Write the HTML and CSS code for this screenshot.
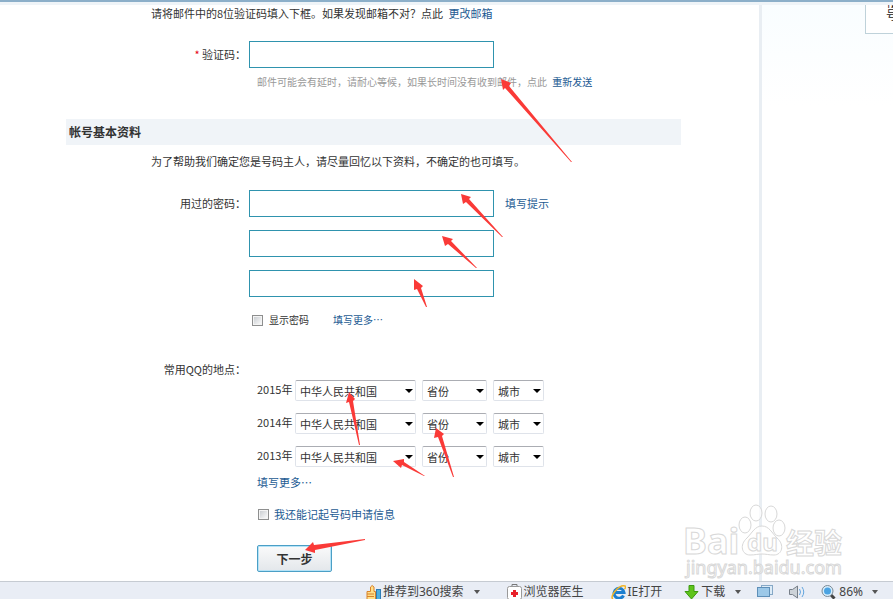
FILE: index.html
```
<!DOCTYPE html>
<html lang="zh-CN">
<head>
    <meta charset="UTF-8">
    <meta name="viewport" content="width=device-width, initial-scale=1.0">
    <title>帐号申诉</title>
    <link rel="stylesheet" href="styles.css">
</head>
<body>
    <div class="topline"></div>
    <div class="main">
        <form class="content">
            <p class="tip">请将邮件中的8位验证码填入下框。如果发现邮箱不对&#65311;点此 <a href="#">更改邮箱</a></p>
            <div class="row code_row">
                <label class="name" for="code"><span class="must">*</span> 验证码&#65306;</label>
                <input class="text" type="text" id="code">
            </div>
            <p class="hint">邮件可能会有延时&#65292;请耐心等候&#65292;如果长时间没有收到邮件&#65292;点此 <a href="#">重新发送</a></p>

            <h2>帐号基本资料</h2>
            <p class="tip">为了帮助我们确定您是号码主人&#65292;请尽量回忆以下资料&#65292;不确定的也可填写。</p>

            <!-- 用过的密码 -->
            <div class="row pwd_row">
                <label class="name" for="pwd1">用过的密码&#65306;</label>
                <div class="pwds">
                    <input class="text" type="text" id="pwd1">
                    <input class="text" type="text" aria-label="密码2">
                    <input class="text" type="text" aria-label="密码3">
                </div>
                <a class="pwd_tip" href="#">填写提示</a>
            </div>
            <div class="show_row">
                <input class="check" type="checkbox" id="show">
                <label for="show">显示密码</label>
                <a href="#">填写更多…</a>
            </div>

            <!-- 常用地点 -->
            <div class="name">常用QQ的地点&#65306;</div>
            <div class="places">
                <span>2015年</span>
                <select aria-label="2015年国家"><option>中华人民共和国</option></select>
                <select aria-label="2015年省份"><option>省份</option></select>
                <select aria-label="2015年城市"><option>城市</option></select>
                <span>2014年</span>
                <select aria-label="2014年国家"><option>中华人民共和国</option></select>
                <select aria-label="2014年省份"><option>省份</option></select>
                <select aria-label="2014年城市"><option>城市</option></select>
                <span>2013年</span>
                <select aria-label="2013年国家"><option>中华人民共和国</option></select>
                <select aria-label="2013年省份"><option>省份</option></select>
                <select aria-label="2013年城市"><option>城市</option></select>
            </div>
            <div class="more"><a href="#">填写更多…</a></div>
            <div class="remember">
                <input class="check" type="checkbox" id="remember">
                <label for="remember">我还能记起号码申请信息</label>
            </div>
            <button class="next" type="button">下一步</button>
        </form>
        <div class="side">
            <div class="side_box"><p>帐号</p></div>
        </div>
    </div>

    <!-- 浏览器状态栏 -->
    <div class="status">
        <button type="button" class="wide">
            <svg width="15" height="16" viewBox="0 0 15 16"><path d="M1 7.500h3.500V3q1.500-3 3.500 0v4.500h1.500v8H1z" fill="#ffe08a" stroke="#d9822b"/><path d="M1 10h7M1 12.500h7" stroke="#d9822b"/><rect x="10.500" y="5.500" width="4" height="10" fill="#4fb0e0" stroke="#2f7db5"/></svg>
            推荐到360搜索<i class="arrow"></i>
        </button>
        <button type="button" class="wide">
            <svg width="15" height="16" viewBox="0 0 15 16"><path d="M5 3V.500h5V3" fill="none" stroke="#777"/><rect x=".5" y="2.500" width="14" height="13" rx="2" fill="#fff" stroke="#999"/><path d="M7.500 6v7M4 9.500h7" stroke="#e8202a" stroke-width="3"/></svg>
            浏览器医生
        </button>
        <button type="button" class="mid">
            <svg width="15" height="16" viewBox="0 0 15 16"><path d="M12.500 11.500A5 5 0 1 1 13 8.500H4" fill="none" stroke="#1c7fd0" stroke-width="3"/><path d="M2 15C-2 13 8 0 14 2c1 .5.500 2-.5 3" fill="none" stroke="#f2b526" stroke-width="1.500"/></svg>
            IE打开
        </button>
        <button type="button">
            <svg width="15" height="16" viewBox="0 0 15 16"><path d="M5 1.500h5v6h4L7.500 15 1 7.500h4z" fill="#5fc41c" stroke="#3d9a10"/></svg>
            下载<i class="arrow"></i>
        </button>
        <button type="button" aria-label="窗口">
            <svg width="16" height="16" viewBox="0 0 16 16"><rect x="4.500" y="1.500" width="11" height="9" fill="#dcebf7" stroke="#86a8c6"/><rect x=".5" y="3.500" width="12" height="9" fill="#9cc8e8" stroke="#5e8fb8"/></svg>
        </button>
        <button type="button" aria-label="声音">
            <svg width="16" height="16" viewBox="0 0 16 16" fill="none"><path d="M.5 5.500h3L8.500 2v12l-5-3.500h-3z" fill="#ccd2d8" stroke="#777f88"/><path d="M10.500 5q2 3 0 6M13 3q3.500 5 0 10" stroke="#62a5de"/></svg>
        </button>
        <button type="button" class="zoom">
            <svg width="15" height="16" viewBox="0 0 15 16"><path d="M9.500 10.500l4 4" stroke="#444" stroke-width="3"/><circle cx="6.500" cy="7" r="5.500" fill="#d5ecfb" stroke="#7c8a96"/><circle cx="6.500" cy="7" r="3.500" fill="#4ba3e2"/></svg>
            86%<i class="arrow"></i>
        </button>
    </div>

    <!-- 水印 -->
    <svg class="watermark" width="170" height="80" viewBox="0 0 170 80">
        <g fill="#fff" fill-opacity=".7" stroke="#d8d8d8">
            <ellipse cx="65" cy="25" rx="6" ry="8"/>
            <ellipse cx="76" cy="13" rx="6" ry="8"/>
            <ellipse cx="91" cy="14" rx="6" ry="8"/>
            <ellipse cx="99" cy="28" rx="6" ry="8"/>
            <path d="M82 26c7 0 10 7 15 12 8 7 5 17-3 17-5 0-8-1-12-1s-7 1-12 1c-8 0-11-10-3-17 5-5 8-12 15-12z"/>
            <text class="wm_logo" x="3" y="54">Bai</text>
            <text class="wm_du" x="67" y="51">du</text>
            <text class="wm_cn" x="106" y="54">经验</text>
            <text class="wm_url" x="6" y="74">jingyan.baidu.com</text>
        </g>
    </svg>

    <!-- 红色箭头标注 -->
    <svg class="marks" width="893" height="599" viewBox="0 0 893 599">
        <polygon points="501,79 511,83 509,86 572,162 571,162 505,88 503,90"/>
        <polygon points="461,194 471,197 469,199 503,237 502,237 466,202 463,204"/>
        <polygon points="442,236 453,239 451,241 477,268 476,268 448,244 445,246"/>
        <polygon points="414,279 423,286 421,288 427,307 426,307 417,289 414,290"/>
        <polygon points="349,392 355,399 353,401 360,445 359,445 349,402 346,403"/>
        <polygon points="436,428 444,434 442,436 454,477 453,477 438,437 434,438"/>
        <polygon points="393,461 404,459 404,462 425,476 424,476 402,465 401,468"/>
        <polygon points="305,550 313,542 314,545 365,539 365,540 315,550 315,553"/>
    </svg>
</body>
</html>
```

FILE: styles.css
```
*{
    margin: 0;
    padding: 0;
    box-sizing: border-box;
}
body{
    position: relative;
    display: flex;
    flex-direction: column;
    height: 100vh;
    overflow: hidden;
    background: #fff;
    color: #333;
    font: 11px/16px "Noto Sans CJK SC", sans-serif;
}
a{
    color: #1d5b93;
    text-decoration: none;
}
input,select,button{
    font: inherit;
    color: inherit;
}
.topline{
    flex: none;
    height: 5px;
    background: #eff4f8;
    border-top: 2px solid #8cafc9;
}
.main{
    flex: 1;
    display: flex;
    min-height: 0;
    overflow: hidden;
}

/* 表单 */
.content{
    flex: 1;
    padding: 0 78px 0 66px;
}
.content p a{
    margin-left: 3px;
}
.content .tip{
    padding-left: 85px;
}
.content .row{
    display: flex;
    gap: 3px;
}
.content .name{
    width: 180px;
    line-height: 16px;
    text-align: right;
}
.content .row .name{
    line-height: 27px;
}
.content .must{
    color: #e60012;
}
.content .text{
    display: block;
    width: 245px;
    height: 27px;
    padding: 0 4px;
    border: 1px solid #2f93ae;
    background: #fff;
}
.content .code_row{
    margin-top: 20px;
}
.content .hint{
    margin-top: 6px;
    padding-left: 191px;
    font-size: 10px;
    color: #999;
}
.content h2{
    margin: 29px 0 8px;
    padding-left: 3px;
    background: #f0f4f8;
    font-size: 12px;
    line-height: 26px;
}
.content .pwd_row{
    margin-top: 21px;
}
.content .pwds{
    display: grid;
    gap: 13px;
}
.content .pwd_tip{
    padding-left: 8px;
    line-height: 27px;
}
.content .show_row{
    display: flex;
    align-items: center;
    margin: 15px 0 33px;
    padding-left: 186px;
    font-size: 10px;
}
.content .show_row label{
    margin: 0 24px 0 6px;
}
.content .check{
    appearance: none;
    width: 11px;
    height: 11px;
    border: 1px solid #8e8f8f;
    background: linear-gradient(135deg,#c4c8cc,#fff);
    box-shadow: inset 0 0 0 1px #f4f4f4;
}
.content .places{
    display: grid;
    grid-template-columns: 32px 121px 65px 51px;
    gap: 12px 6px;
    margin-top: 3px;
    padding-left: 191px;
}
.content .places span{
    line-height: 18px;
    white-space: nowrap;
}
.content .places select{
    appearance: none;
    height: 21px;
    padding: 1px 0 0 4px;
    border: 1px solid #dfe3ea;
    border-top-color: #abadb3;
    border-radius: 2px;
    background: #fff url("data:image/svg+xml,%3Csvg xmlns='http://www.w3.org/2000/svg' width='8' height='4'%3E%3Cpath d='M0 0h8L4 4z'/%3E%3C/svg%3E") no-repeat right 2px center;
}
.content .more{
    margin-top: 7px;
    padding-left: 191px;
}
.content .remember{
    display: flex;
    align-items: center;
    gap: 5px;
    margin: 16px 0 23px;
    padding-left: 192px;
    color: #1d5b93;
}
.content .next{
    display: block;
    width: 75px;
    height: 27px;
    margin-left: 191px;
    border: 1px solid #4b9fc6;
    border-radius: 2px;
    background: linear-gradient(#fafafa,#e3e7eb);
    box-shadow: inset 0 0 0 1px #b5e3f7;
    font-size: 12px;
    font-weight: bold;
}

/* 右侧 */
.side{
    width: 134px;
    border-left: 3px solid #e9eef3;
    background: linear-gradient(#f9fdff,#fff 100px);
}
.side .side_box{
    height: 29px;
    margin-left: 103px;
    padding-left: 20px;
    overflow: hidden;
    border: 1px solid #bfd2da;
    border-width: 0 0 1px 1px;
    background: #fff;
}
.side .side_box p{
    width: 12px;
    margin-top: -10px;
    font-size: 12px;
    line-height: 13px;
    color: #222;
}

/* 状态栏 */
.status{
    flex: none;
    display: flex;
    justify-content: flex-end;
    gap: 16px;
    height: 18px;
    padding: 2px 15px 0 0;
    overflow: hidden;
    border-top: 1px solid #c6cbd2;
    background: #e9edf5;
    color: #444;
    font: 12px/16px "Noto Sans", "Noto Sans CJK SC", sans-serif;
}
.status button{
    display: flex;
    align-items: center;
    gap: 2px;
    height: 16px;
    border: 0;
    background: none;
    white-space: nowrap;
}
.status .wide{
    margin-right: 11px;
}
.status .mid{
    margin-right: 6px;
}
.status .arrow{
    margin-left: 8px;
    border: 3px solid transparent;
    border-top: 4px solid #555;
    border-bottom: 0;
}
.status .zoom{
    gap: 3px;
}
.status .zoom .arrow{
    margin-left: 6px;
}

/* 浮在页面上的水印和箭头 */
.watermark{
    position: absolute;
    right: 43px;
    bottom: 19px;
}
.watermark text{
    font-family: "Noto Sans", "Noto Sans CJK SC", sans-serif;
    font-weight: bold;
}
.watermark .wm_logo{
    font-size: 36px;
}
.watermark .wm_du{
    font-size: 24px;
}
.watermark .wm_cn{
    font-size: 28px;
}
.watermark .wm_url{
    font-size: 18px;
    font-weight: normal;
}
.marks{
    position: absolute;
    left: 0;
    top: 0;
    fill: #fa3a37;
    pointer-events: none;
}
```
